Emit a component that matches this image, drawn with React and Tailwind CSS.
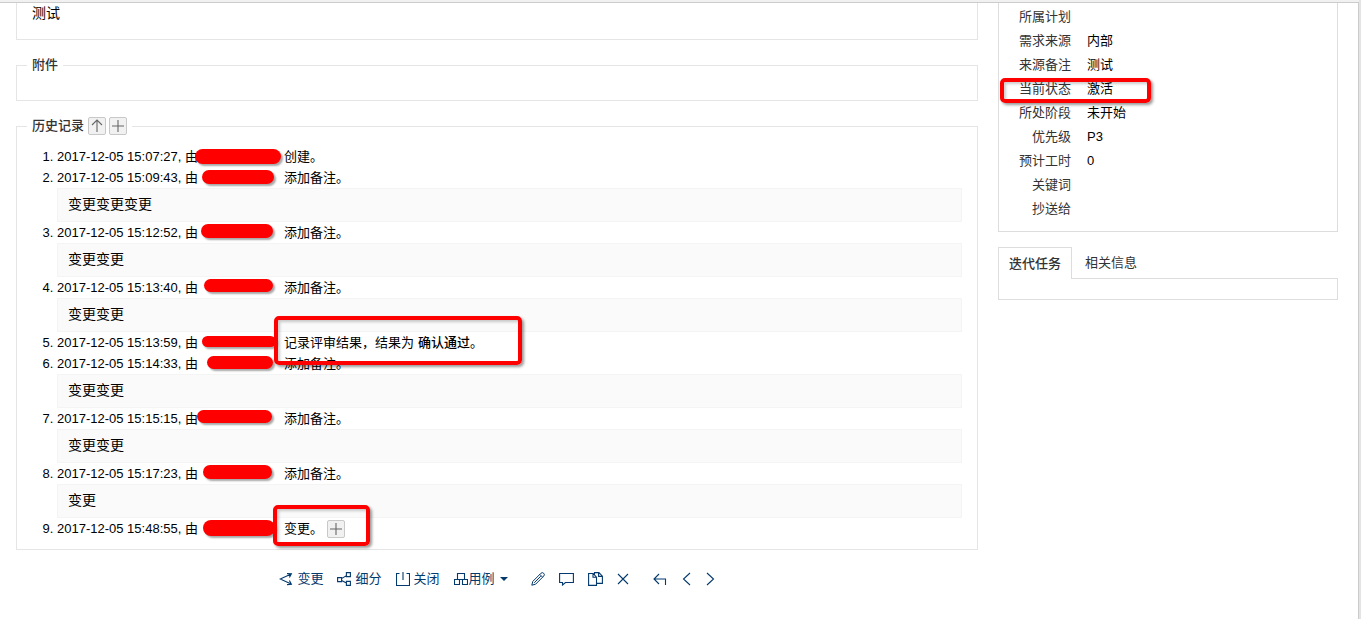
const HISTORY = [
    { time: "2017-12-05 15:07:27", text: "创建。", mark: "left-[138px] top-[3px] w-[86px] h-[15px]" },
    { time: "2017-12-05 15:09:43", text: "添加备注。", comment: "变更变更变更", mark: "left-[145px] top-[3px] w-[72px] h-[14px]" },
    { time: "2017-12-05 15:12:52", text: "添加备注。", comment: "变更变更", mark: "left-[144px] top-[2px] w-[72px] h-[14px]" },
    { time: "2017-12-05 15:13:40", text: "添加备注。", comment: "变更变更", mark: "left-[147px] top-[2px] w-[69px] h-[13px]" },
    {
        time: "2017-12-05 15:13:59",
        text: "记录评审结果，结果为",
        result: "确认通过",
        mark: "left-[145px] top-[4px] w-[74px] h-[11px]",
        frame: "left-[217px] -top-[16px] w-[248px] h-[49px]",
    },
    { time: "2017-12-05 15:14:33", text: "添加备注。", comment: "变更变更", mark: "left-[150px] top-[3px] w-[66px] h-[13px]" },
    { time: "2017-12-05 15:15:15", text: "添加备注。", comment: "变更变更", mark: "left-[140px] top-[2px] w-[75px] h-[13px]" },
    { time: "2017-12-05 15:17:23", text: "添加备注。", comment: "变更", mark: "left-[146px] top-[2px] w-[69px] h-[14px]" },
    {
        time: "2017-12-05 15:48:55",
        text: "变更。",
        expandable: true,
        mark: "left-[146px] top-[2px] w-[72px] h-[16px]",
        frame: "left-[216px] -top-[13px] w-[97px] h-[41px]",
    },
];

const INFO = [
    { label: "所属计划", value: "" },
    { label: "需求来源", value: "内部" },
    { label: "来源备注", value: "测试" },
    { label: "当前状态", value: "激活", framed: true },
    { label: "所处阶段", value: "未开始" },
    { label: "优先级", value: "P3" },
    { label: "预计工时", value: "0" },
    { label: "关键词", value: "" },
    { label: "抄送给", value: "" },
];

const Icon = ({ children, width = 14, height = 14 }) => (
    <svg
        width={width}
        height={height}
        viewBox={`0 0 ${width} ${height}`}
        fill="none"
        stroke="currentColor"
        strokeWidth="1.1"
        className="shrink-0"
        aria-hidden="true"
    >
        {children}
    </svg>
);

const MiniButton = ({ label, children }) => (
    <button
        type="button"
        aria-label={label}
        className="flex size-[18px] items-center justify-center rounded-xs border border-[#c8c8c8] bg-[#f1f1f1] text-[#666]"
    >
        {children}
    </button>
);

const PlusIcon = () => (
    <Icon>
        <path d="M7 1v12M1 7h12" />
    </Icon>
);

// Red frame drawn over the page
const Frame = ({ className }) => (
    <span
        className={`pointer-events-none absolute z-10 rounded-[5px] border-4 border-[#ff0000] shadow-[2px_2px_3px_rgba(0,0,0,0.4),inset_2px_2px_3px_rgba(0,0,0,0.2)] ${className}`}
    />
);

const HistoryItem = ({ item }) => (
    <li className="relative">
        <div className="flex h-[21px] items-center whitespace-nowrap">
            <span className="w-[227px]">{item.time}, 由</span>
            <span>{item.text}</span>
            {item.result && (
                <span>
                    <strong className="ml-1 font-medium">{item.result}</strong>。
                </span>
            )}
            {item.expandable && (
                <span className="ml-1">
                    <MiniButton label="展开">
                        <PlusIcon />
                    </MiniButton>
                </span>
            )}
        </div>
        <span className={`absolute rounded-full bg-[#ff0000] shadow-[2px_2px_2px_rgba(0,0,0,0.35)] ${item.mark}`} />
        {item.frame && <Frame className={item.frame} />}
        {item.comment && (
            <div className="border border-[#f4f4f4] bg-[#fafafa] px-[10px] pt-[3px] pb-[5px] text-sm leading-6">
                {item.comment}
            </div>
        )}
    </li>
);

const ToolButton = ({ label, text, gap = "gap-1", children }) => (
    <button type="button" aria-label={text ? undefined : label} className={`flex items-center ${gap}`}>
        {children}
        {text}
    </button>
);

const Toolbar = () => (
    <div className="mt-[19px] flex h-5 items-center justify-center text-[#03396c]">
        <div className="flex items-center gap-[14px]">
            <ToolButton text="变更">
                <Icon>
                    <path d="M8 1.6l4.4.2-2 3.8M12.2 1.9L1.2 7l11 5.1M10.4 8.4l2 3.8-4.4.4" />
                </Icon>
            </ToolButton>
            <ToolButton text="细分">
                <Icon>
                    <path d="M.6 5.6h4v4h-4zM9.4.6h4v4h-4zM9.4 9.4h4v4h-4zM4.6 6.6l4.8-3M4.6 8.4l4.8 2.6" />
                </Icon>
            </ToolButton>
            <ToolButton text="关闭">
                <Icon>
                    <path d="M3.5 1.5h-3v12h13v-12h-3" />
                    <path d="M7 0v8" />
                </Icon>
            </ToolButton>
            <ToolButton text="用例" gap="gap-px">
                <Icon>
                    <path d="M3.5 7.5v-6h7v6M.5 7.5h5v5h-5zM8.5 7.5h5v5h-5zM5.5 7.5h3" />
                </Icon>
                <svg width="8" height="4" viewBox="0 0 8 4" className="order-last ml-1" aria-hidden="true">
                    <path d="M0 0h8L4 4z" fill="currentColor" />
                </svg>
            </ToolButton>
        </div>
        <div className="ml-[23px] flex items-center gap-[14px]">
            <ToolButton label="编辑">
                <Icon>
                    <path
                        strokeWidth="1"
                        d="M.8 13.2l1-3.8L9.9 1.3a1.6 1.6 0 0 1 2.8 2.8l-8.1 8.1zM3.2 10.8l6.6-6.6M8.8 2.4l2.8 2.8"
                    />
                </Icon>
            </ToolButton>
            <ToolButton label="备注">
                <Icon width={15}>
                    <path d="M.6 1.5h13.8v9H6.5l-3 2.5v-2.5H.6z" />
                </Icon>
            </ToolButton>
            <ToolButton label="复制">
                <Icon width={15}>
                    <path d="M8.5 13.4H.6V1.5h4.6l3.3 3.6zM5 1.5v3.8h3.5M6.5 2.6V.6h4.4l3.5 3.6v7.2H8.5M10.6.6v3.8h3.8" />
                </Icon>
            </ToolButton>
            <ToolButton label="删除">
                <Icon width={12}>
                    <path d="M1 2l10 10M11 2L1 12" />
                </Icon>
            </ToolButton>
        </div>
        <div className="ml-6 flex items-center gap-[15px]">
            <ToolButton label="返回">
                <Icon>
                    <path d="M6 2L1 7l5 5M1 7h11.5v6" />
                </Icon>
            </ToolButton>
            <ToolButton label="上一个">
                <Icon width={9}>
                    <path d="M8 1L1.5 7 8 13" />
                </Icon>
            </ToolButton>
            <ToolButton label="下一个">
                <Icon width={9}>
                    <path d="M1 1l6.5 6L1 13" />
                </Icon>
            </ToolButton>
        </div>
    </div>
);

const Sidebar = () => (
    <aside className="w-[340px] shrink-0">
        <div className="border border-t-0 border-[#ddd] pt-[2px] pb-[10px]">
            <table className="w-full">
                <tbody>
                    {INFO.map((row) => (
                        <tr key={row.label} className="h-6">
                            <th scope="row" className="relative w-20 pr-2 text-right font-normal text-[#333]">
                                {row.label}
                                {row.framed && <Frame className="left-[1px] top-[1px] h-[25px] w-[151px]" />}
                            </th>
                            <td className="pl-2 text-left">{row.value}</td>
                        </tr>
                    ))}
                </tbody>
            </table>
        </div>
        <div className="mt-[15px]">
            <div className="flex" role="tablist">
                <button
                    type="button"
                    role="tab"
                    aria-selected="true"
                    className="relative z-10 -mb-px h-8 border border-b-0 border-[#ddd] bg-white px-[10px] font-medium text-[#333]"
                >
                    迭代任务
                </button>
                <button type="button" role="tab" aria-selected="false" className="h-[31px] px-[13px] text-[#333]">
                    相关信息
                </button>
            </div>
            <div role="tabpanel" className="h-[22px] border border-[#ddd]" />
        </div>
    </aside>
);

export default function App() {
    return (
        <div className="min-h-screen border-r-2 border-[#e4e4e4] bg-white font-['Liberation_Sans','Noto_Sans_CJK_SC',sans-serif] text-[13px] leading-5 text-black">
            <div className="h-[3px] border-b border-[#ccc] bg-[#f1f1f1]" />
            <div className="flex min-h-[616px] gap-5 border-r border-[#ccc] pr-5 pl-4">
                <main className="min-w-0 flex-1">
                    <div className="h-[37px] border border-t-0 border-[#e5e5e5] px-[15px] text-sm leading-5">测试</div>

                    <fieldset className="mt-[15px] min-w-0 border border-[#e5e5e5]">
                        <legend className="ml-[10px] px-[5px] font-medium text-[#333]">附件</legend>
                        <div className="h-[25px]" />
                    </fieldset>

                    <fieldset className="mt-[15px] min-w-0 border border-[#e5e5e5] pr-[15px] pb-[10px] pl-10">
                        <legend className="-ml-[30px] flex items-center px-[5px] font-medium text-[#333]">
                            <span className="mr-1">历史记录</span>
                            <span className="flex gap-[3px]">
                                <MiniButton label="倒序">
                                    <Icon>
                                        <path d="M7 1v12M2 6l5-5 5 5" />
                                    </Icon>
                                </MiniButton>
                                <MiniButton label="全部展开">
                                    <PlusIcon />
                                </MiniButton>
                            </span>
                        </legend>
                        <ol className="list-decimal pt-[10px]">
                            {HISTORY.map((item) => (
                                <HistoryItem key={item.time} item={item} />
                            ))}
                        </ol>
                    </fieldset>

                    <Toolbar />
                </main>
                <Sidebar />
            </div>
        </div>
    );
}
